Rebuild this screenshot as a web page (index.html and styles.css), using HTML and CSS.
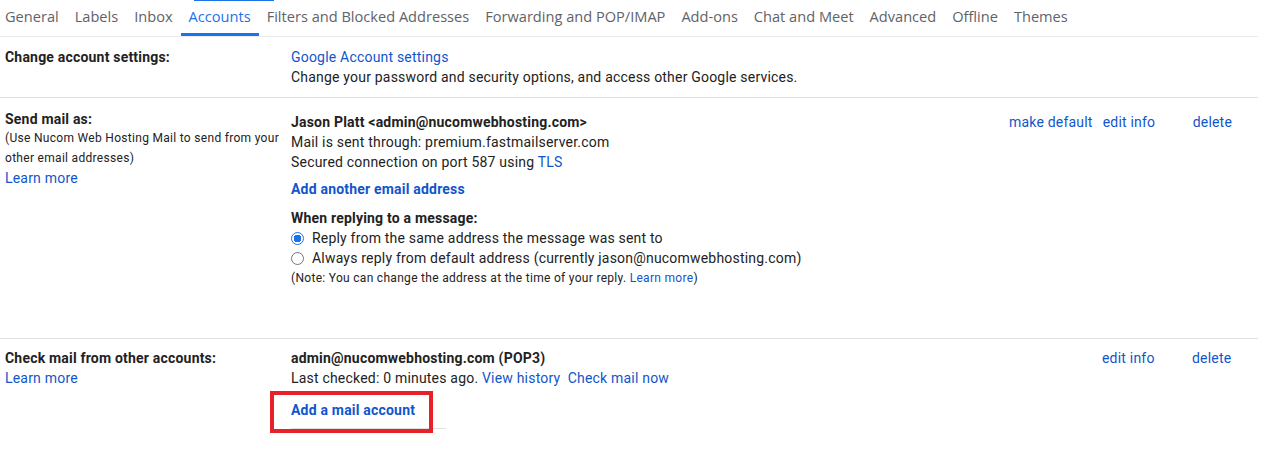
FILE: index.html
```html
<!DOCTYPE html>
<html>
<head>
<meta charset="utf-8">
<link rel="stylesheet" href="styles.css">
</head>
<body>
<div class="page">
  <nav class="tabs">
    <span class="tab first">General</span>
    <span class="tab">Labels</span>
    <span class="tab">Inbox</span>
    <span class="tab active">Accounts</span>
    <span class="tab">Filters and Blocked Addresses</span>
    <span class="tab">Forwarding and POP/IMAP</span>
    <span class="tab">Add-ons</span>
    <span class="tab">Chat and Meet</span>
    <span class="tab">Advanced</span>
    <span class="tab">Offline</span>
    <span class="tab">Themes</span>
    <span class="focus-line"></span>
  </nav>

  <section class="row r1">
    <div class="label"><b>Change account settings:</b></div>
    <div class="value">
      <a class="link">Google Account settings</a>
      <div>Change your password and security options, and access other Google services.</div>
    </div>
    <div class="actions"></div>
  </section>

  <section class="row r2">
    <div class="label">
      <b>Send mail as:</b>
      <div class="small">(Use Nucom Web Hosting Mail to send from your other email addresses)</div>
      <a class="link">Learn more</a>
    </div>
    <div class="value">
      <b>Jason Platt &lt;admin@nucomwebhosting.com&gt;</b>
      <div>Mail is sent through: premium.fastmailserver.com</div>
      <div>Secured connection on port 587 using <a class="link">TLS</a></div>
      <a class="link strong add">Add another email address</a>
      <b class="reply-head">When replying to a message:</b>
      <div class="radio-line"><span class="radio checked"></span>Reply from the same address the message was sent to</div>
      <div class="radio-line"><span class="radio"></span>Always reply from default address (currently jason@nucomwebhosting.com)</div>
      <div class="small note">(Note: You can change the address at the time of your reply. <a class="link">Learn more</a>)</div>
    </div>
    <div class="actions">
      <a class="link mk">make default</a>
      <a class="link ed">edit info</a>
      <a class="link">delete</a>
    </div>
  </section>

  <section class="row r3">
    <div class="label">
      <b>Check mail from other accounts:</b>
      <a class="link">Learn more</a>
    </div>
    <div class="value">
      <b>admin@nucomwebhosting.com (POP3)</b>
      <div>Last checked: 0 minutes ago. <a class="link">View history</a>&nbsp; <a class="link">Check mail now</a></div>
      <div class="add-mail">
        <a class="link strong">Add a mail account</a>
        <span class="highlight"></span>
      </div>
    </div>
    <div class="actions">
      <a class="link ed">edit info</a>
      <a class="link">delete</a>
    </div>
  </section>
</div>
</body>
</html>
```

FILE: styles.css
```css
* { box-sizing: border-box; }
html, body { margin: 0; padding: 0; background: #fff; }
body {
  font-family: Roboto, "Liberation Sans", Arial, sans-serif;
  font-size: 14px;
  letter-spacing: 0.2px;
  color: #222;
  width: 1261px;
  height: 462px;
  overflow: hidden;
}
.page { width: 1258px; }

.tabs {
  position: relative;
  display: flex;
  height: 37px;
  border-bottom: 1px solid #e8eaed;
  padding-left: 5px;
}
.tab {
  font-family: "Open Sans", Roboto, sans-serif;
  font-size: 14.6px;
  letter-spacing: 0;
  color: #5f6368;
  padding: 0 8px;
  line-height: 32px;
  height: 36px;
  white-space: nowrap;
}
.tab.first { padding-left: 0; }
.tab.active {
  color: #1a73e8;
  border-bottom: 3px solid #1a73e8;
}
.focus-line {
  position: absolute;
  left: 194px;
  top: 0;
  width: 80px;
  height: 1px;
  background: #1a73e8;
}

.row {
  display: grid;
  grid-template-columns: 286px 718px 1fr;
  padding-left: 5px;
  border-bottom: 1px solid #e0e0e0;
  line-height: 20px;
}
.label b, .value b { font-weight: 700; color: #222; }
.label { display: flex; flex-direction: column; align-items: flex-start; }
.value { display: flex; flex-direction: column; align-items: flex-start; }

.link { color: #15c; text-decoration: none; cursor: pointer; }
.link.strong { font-weight: 700; }

.small { font-size: 12px; line-height: 19.5px; letter-spacing: 0.3px; color: #222; }

.r1 { padding-top: 10px; padding-bottom: 10px; }

.r2 { padding-top: 10px; padding-bottom: 49px; }
.r2 .label { margin-top: 1px; }
.r2 .label .small { width: 284px; }
.r2 .value { margin-top: 4px; }
.r2 .add { margin-top: 7px; }
.r2 .reply-head { margin-top: 9px; }
.radio-line { display: flex; align-items: center; }
.radio {
  width: 13px; height: 13px; border-radius: 50%;
  border: 1px solid #757575;
  margin-right: 8px;
  flex: none;
}
.radio.checked {
  border: 1.5px solid #1a73e8;
  background: radial-gradient(circle, #1a73e8 0 3.6px, #fff 4px);
}
.note { margin-top: 1px; }

.actions { display: flex; align-items: flex-start; }
.r2 .actions { margin-top: 4px; }
.actions .mk { margin-right: 10px; }
.actions .ed { width: 90px; }
.r3 .actions { padding-left: 93px; }

.r3 { border-bottom: none; padding-top: 9px; }
.add-mail {
  position: relative;
  margin-top: 12px;
  width: 155px;
  padding-bottom: 8px;
  border-bottom: 1px solid #e0e0e0;
}
.highlight {
  position: absolute;
  left: -21px;
  top: -9px;
  width: 163px;
  height: 42px;
  border: 4px solid #e8202a;
}
```
